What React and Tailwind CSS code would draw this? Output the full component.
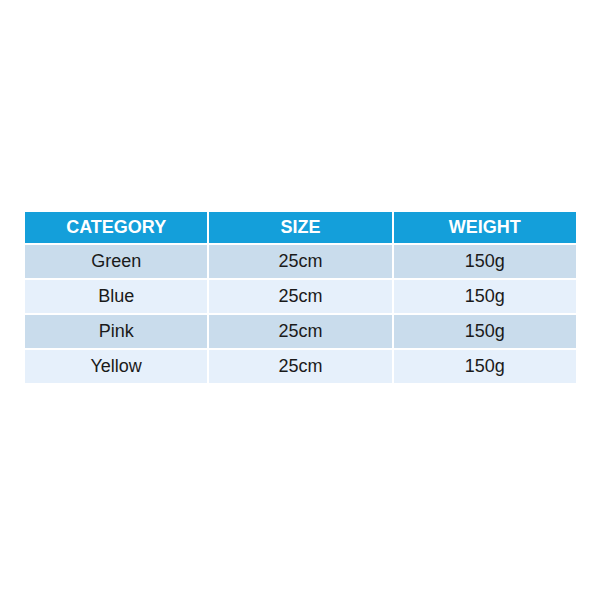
export default function App() {
  const rows = [
    ["Green", "25cm", "150g"],
    ["Blue", "25cm", "150g"],
    ["Pink", "25cm", "150g"],
    ["Yellow", "25cm", "150g"],
  ];
  return (
    <div className="w-[600px] h-[600px] bg-white pt-[212px] pl-[25px]" style={{ fontFamily: '"Liberation Sans", Arial, sans-serif' }}>
      <div className="w-[551px] grid grid-cols-3 gap-[2px] bg-white">
        {["CATEGORY", "SIZE", "WEIGHT"].map((h) => (
          <div key={h} className="h-[31px] bg-[#149fda] text-white font-bold text-[18px] flex items-center justify-center">
            {h}
          </div>
        ))}
        {rows.map((r, i) =>
          r.map((c, j) => (
            <div
              key={i + "-" + j}
              className={`h-[33px] flex items-center justify-center text-[18px] text-[#1a1a1a] ${i % 2 === 0 ? "bg-[#c9dcec]" : "bg-[#e6f0fb]"}`}
            >
              {c}
            </div>
          ))
        )}
      </div>
    </div>
  );
}
